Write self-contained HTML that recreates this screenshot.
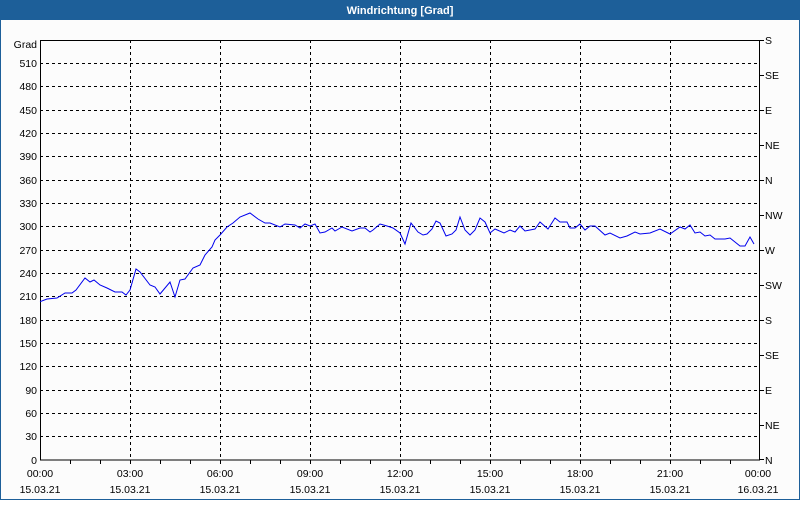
<!DOCTYPE html>
<html><head><meta charset="utf-8"><style>
html,body{margin:0;padding:0;background:#fff;}
body{width:800px;height:500px;overflow:hidden;position:relative;font-family:"Liberation Sans",sans-serif;}
</style></head><body>
<svg width="800" height="500" xmlns="http://www.w3.org/2000/svg" font-family="Liberation Sans, sans-serif" font-size="10.5">
<rect x="0" y="0" width="800" height="500" fill="#fcfcfc"/>
<rect x="0.5" y="0.5" width="799" height="499" fill="none" stroke="#1d5f99" stroke-width="1"/>
<rect x="0" y="0" width="800" height="20" fill="#1d5f99"/>
<text x="400" y="14" fill="#fff" font-weight="bold" font-size="11" text-anchor="middle">Windrichtung [Grad]</text>
<g stroke="#000" stroke-width="1" stroke-dasharray="3,3" fill="none">
<path d="M40 63.5H760M40 86.5H760M40 110.5H760M40 133.5H760M40 156.5H760M40 180.5H760M40 203.5H760M40 226.5H760M40 250.5H760M40 273.5H760M40 296.5H760M40 320.5H760M40 343.5H760M40 366.5H760M40 390.5H760M40 413.5H760M40 436.5H760"/>
<path d="M130.5 40V460M220.5 40V460M310.5 40V460M400.5 40V460M490.5 40V460M580.5 40V460M670.5 40V460"/>
</g>
<rect x="40.5" y="40.5" width="719" height="419.5" fill="none" stroke="#000"/>
<g stroke="#000">
<path d="M70.5 460v4M100.5 460v4M130.5 460v4M160.5 460v4M190.5 460v4M220.5 460v4M250.5 460v4M280.5 460v4M310.5 460v4M340.5 460v4M370.5 460v4M400.5 460v4M430.5 460v4M460.5 460v4M490.5 460v4M520.5 460v4M550.5 460v4M580.5 460v4M610.5 460v4M640.5 460v4M670.5 460v4M700.5 460v4M730.5 460v4"/>
<path d="M760 40.5h4M760 75.5h4M760 110.5h4M760 145.5h4M760 180.5h4M760 215.5h4M760 250.5h4M760 285.5h4M760 320.5h4M760 355.5h4M760 390.5h4M760 425.5h4M760 459.5h4"/>
</g>
<g text-anchor="end" fill="#000">
<text x="37" y="48">Grad</text>
<text x="37" y="67">510</text><text x="37" y="90">480</text><text x="37" y="114">450</text><text x="37" y="137">420</text><text x="37" y="160">390</text><text x="37" y="184">360</text><text x="37" y="207">330</text><text x="37" y="230">300</text><text x="37" y="254">270</text><text x="37" y="277">240</text><text x="37" y="300">210</text><text x="37" y="324">180</text><text x="37" y="347">150</text><text x="37" y="370">120</text><text x="37" y="394">90</text><text x="37" y="417">60</text><text x="37" y="440">30</text><text x="37" y="464">0</text>
</g>
<g fill="#000">
<text x="765" y="44">S</text><text x="765" y="79">SE</text><text x="765" y="114">E</text><text x="765" y="149">NE</text><text x="765" y="184">N</text><text x="765" y="219">NW</text><text x="765" y="254">W</text><text x="765" y="289">SW</text><text x="765" y="324">S</text><text x="765" y="359">SE</text><text x="765" y="394">E</text><text x="765" y="429">NE</text><text x="765" y="464">N</text>
</g>
<g text-anchor="middle" fill="#000">
<text x="40" y="477">00:00</text><text x="130" y="477">03:00</text><text x="220" y="477">06:00</text><text x="310" y="477">09:00</text><text x="400" y="477">12:00</text><text x="490" y="477">15:00</text><text x="580" y="477">18:00</text><text x="670" y="477">21:00</text><text x="758" y="477">00:00</text>
<text x="40" y="493">15.03.21</text><text x="130" y="493">15.03.21</text><text x="220" y="493">15.03.21</text><text x="310" y="493">15.03.21</text><text x="400" y="493">15.03.21</text><text x="490" y="493">15.03.21</text><text x="580" y="493">15.03.21</text><text x="670" y="493">15.03.21</text><text x="758" y="493">16.03.21</text>
</g>
<polyline fill="none" stroke="#0000ee" stroke-width="1" points="40,301.7 47,299 57,298 65,293 72,293 76,290 85,278 90,282 94,280 100,285 107,288 115,292 122,292 126,295 130,290 136,269 140,272 150,285 155,287 160,294 170,282 175,297 180,280 185,279 193,268 200,265 205,255 212,247 215,240 220,235 227,227 233,223 240,217 250,213 258,219 265,223 270,223 280,227 285,224 295,225 300,228 305,224 310,226 315,224 320,233 325,232 332,228 335,231 342,227 352,231 360,228 365,228 370,232 373,230 380,224 387,226 393,228 400,233 405,244 411,223 418,232 423,235 427,234 432,229 436,221 440,223 446,236 452,234 456,230 460,217 465,230 470,235 475,230 480,218 485,222 490,233 495,229 504,233 510,230 515,232 520,226 525,231 535,229 540,222 548,229 555,218 560,222 567,222 570,228 575,228 580,224 585,230 590,226 595,226 605,235 610,233 620,238 627,236 635,232 640,234 650,233 660,229 670,234 680,227 685,229 690,225 695,233 700,232 705,236 710,235 715,239 725,239 730,238 740,246 745,246 750,237 754,244"/>
</svg>
</body></html>
